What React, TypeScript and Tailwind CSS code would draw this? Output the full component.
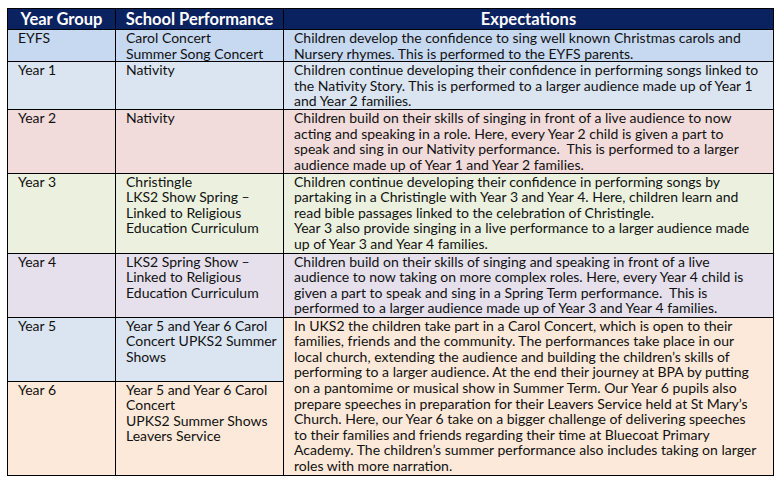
const rows = [
  {
    year: "EYFS",
    bg: "bg-[#c6d9f1]",
    h: "h-[31px]",
    perf: ["Carol Concert", "Summer Song Concert"],
    exp: [
      "Children develop the confidence to sing well known Christmas carols and",
      "Nursery rhymes. This is performed to the EYFS parents.",
    ],
  },
  {
    year: "Year 1",
    bg: "bg-[#dbe5f1]",
    h: "h-[48px]",
    perf: ["Nativity"],
    exp: [
      "Children continue developing their confidence in performing songs linked to",
      "the Nativity Story. This is performed to a larger audience made up of Year 1",
      "and Year 2 families.",
    ],
  },
  {
    year: "Year 2",
    bg: "bg-[#f2dcdb]",
    h: "h-[63px]",
    perf: ["Nativity"],
    exp: [
      "Children build on their skills of singing in front of a live audience to now",
      "acting and speaking in a role. Here, every Year 2 child is given a part to",
      "speak and sing in our Nativity performance.\u00a0 This is performed to a larger",
      "audience made up of Year 1 and Year 2 families.",
    ],
  },
  {
    year: "Year 3",
    bg: "bg-[#ebf1de]",
    h: "h-[80px]",
    perf: ["Christingle", "LKS2 Show Spring –", "Linked to Religious", "Education Curriculum"],
    exp: [
      "Children continue developing their confidence in performing songs by",
      "partaking in a Christingle with Year 3 and Year 4. Here, children learn and",
      "read bible passages linked to the celebration of Christingle.",
      "Year 3 also provide singing in a live performance to a larger audience made",
      "up of Year 3 and Year 4 families.",
    ],
  },
  {
    year: "Year 4",
    bg: "bg-[#e5e0ec]",
    h: "h-[64px]",
    perf: ["LKS2 Spring Show –", "Linked to Religious", "Education Curriculum"],
    exp: [
      "Children build on their skills of singing and speaking in front of a live",
      "audience to now taking on more complex roles. Here, every Year 4 child is",
      "given a part to speak and sing in a Spring Term performance.\u00a0 This is",
      "performed to a larger audience made up of Year 3 and Year 4 families.",
    ],
  },
];

const ks2Text = [
  "In UKS2 the children take part in a Carol Concert, which is open to their",
  "families, friends and the community. The performances take place in our",
  "local church, extending the audience and building the children’s skills of",
  "performing to a larger audience. At the end their journey at BPA by putting",
  "on a pantomime or musical show in Summer Term. Our Year 6 pupils also",
  "prepare speeches in preparation for their Leavers Service held at St Mary’s",
  "Church. Here, our Year 6 take on a bigger challenge of delivering speeches",
  "to their families and friends regarding their time at Bluecoat Primary",
  "Academy. The children’s summer performance also includes taking on larger",
  "roles with more narration.",
];

const Lines = ({ lines }: { lines: string[] }) => (
  <>
    {lines.map((l, i) => (
      <div key={i} className="whitespace-pre">
        {l}
      </div>
    ))}
  </>
);

const cell = "border border-black align-top pl-[10px] pr-1 pt-0";

export default function App() {
  return (
    <div className="min-h-[487px] w-[780px] bg-white pl-[7px] pt-[8px] font-['Lato','Liberation_Sans',sans-serif] text-[14px] leading-[15.6px] text-[#111]">
      <table className="w-[766px] table-fixed border-collapse">
        <colgroup>
          <col className="w-[108px]" />
          <col className="w-[168px]" />
          <col className="w-[490px]" />
        </colgroup>
        <thead>
          <tr className="h-[21px] bg-[#0b2260] text-[16.5px] leading-[20px] font-bold text-white">
            <th className="border border-black text-center">Year Group</th>
            <th className="border border-black text-center">School Performance</th>
            <th className="border border-black text-center">Expectations</th>
          </tr>
        </thead>
        <tbody>
          {rows.map((r) => (
            <tr key={r.year} className={`${r.bg} ${r.h}`}>
              <td className={cell}>{r.year}</td>
              <td className={cell}>
                <Lines lines={r.perf} />
              </td>
              <td className={cell}>
                <Lines lines={r.exp} />
              </td>
            </tr>
          ))}
          <tr className="h-[64px]">
            <td className={`${cell} bg-[#dbe5f1]`}>Year 5</td>
            <td className={`${cell} bg-[#dbe5f1]`}>
              <Lines lines={["Year 5 and Year 6 Carol", "Concert UPKS2 Summer", "Shows"]} />
            </td>
            <td rowSpan={2} className={`${cell} bg-[#fde9d9]`}>
              <Lines lines={ks2Text} />
            </td>
          </tr>
          <tr className="h-[94px] bg-[#fde9d9]">
            <td className={cell}>Year 6</td>
            <td className={cell}>
              <Lines lines={["Year 5 and Year 6 Carol", "Concert", "UPKS2 Summer Shows", "Leavers Service"]} />
            </td>
          </tr>
        </tbody>
      </table>
    </div>
  );
}
